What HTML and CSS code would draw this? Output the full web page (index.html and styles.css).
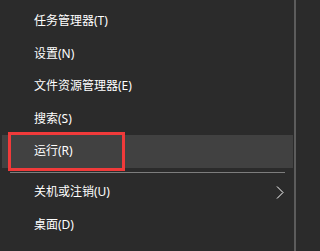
FILE: index.html
```html
<!DOCTYPE html>
<html lang="zh-CN">
<head>
<meta charset="utf-8">
<title>菜单</title>
<link rel="stylesheet" href="styles.css">
</head>
<body>
<div class="menu">
  <div class="item">任务管理器(T)</div>
  <div class="item">设置(N)</div>
  <div class="item">文件资源管理器(E)</div>
  <div class="item">搜索(S)</div>
  <div class="item active">运行(R)</div>
  <div class="sep"></div>
  <div class="item sub"><span>关机或注销(U)</span>
    <svg class="chev" width="8" height="13" viewBox="0 0 8 13"><polyline points="1,0.5 7,6.5 1,12.5" fill="none" stroke="#ffffff" stroke-width="1"/></svg>
  </div>
  <div class="item">桌面(D)</div>
  <div class="mark"></div>
</div>
</body>
</html>
```

FILE: styles.css
```css
html, body {
  margin: 0;
  padding: 0;
  background: #2b2b2b;
}
body {
  width: 296px;
  height: 251px;
  overflow: hidden;
}
.menu {
  position: relative;
  box-sizing: border-box;
  width: 296px;
  height: 251px;
  padding: 5px 1px 0 2px;
  border-right: 2px solid #5c5c5c;
  font-family: "Noto Sans", "Noto Sans CJK SC", sans-serif;
  font-size: 12px;
  color: #ffffff;
}
.item {
  display: flex;
  align-items: center;
  justify-content: space-between;
  height: 32.5px;
  line-height: 32.5px;
  padding: 0 9px 0 32px;
  white-space: nowrap;
}
.item.active {
  background: #414141;
}
.sep {
  height: 1px;
  margin: 4.5px 8px 3px 8px;
  background: #7d7d7d;
}
.chev {
  display: block;
}
.mark {
  position: absolute;
  left: 8px;
  top: 132px;
  width: 117px;
  height: 39px;
  box-sizing: border-box;
  border: 3px solid #f03a3a;
}
```
